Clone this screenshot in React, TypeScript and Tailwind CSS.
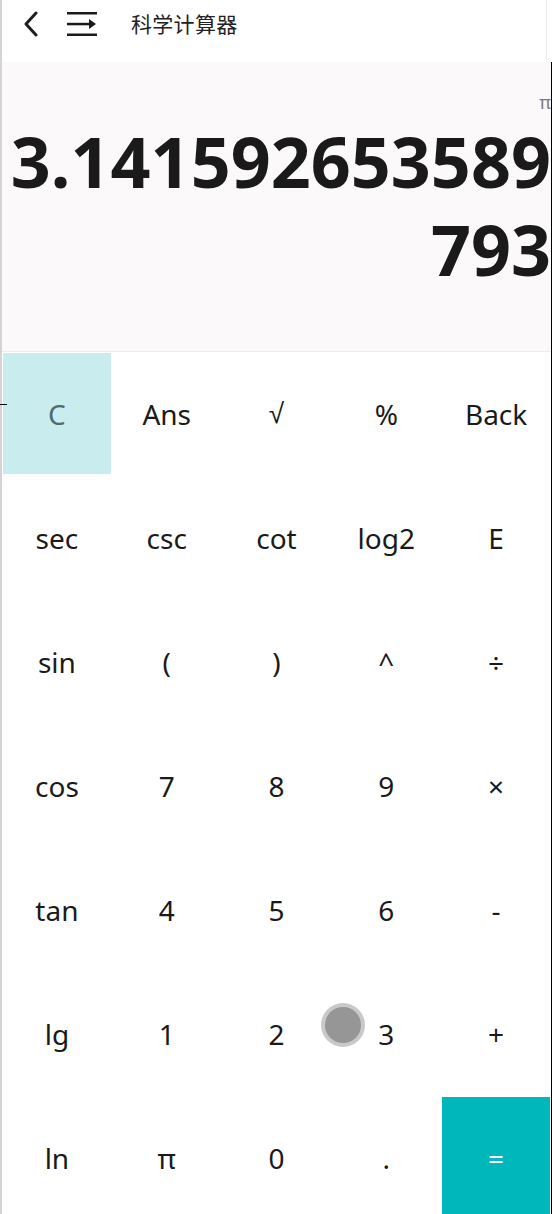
import React from "react";

const rows: string[][] = [
  ["C", "Ans", "√", "%", "Back"],
  ["sec", "csc", "cot", "log2", "E"],
  ["sin", "(", ")", "^", "÷"],
  ["cos", "7", "8", "9", "×"],
  ["tan", "4", "5", "6", "-"],
  ["lg", "1", "2", "3", "+"],
  ["ln", "π", "0", ".", "="],
];

export default function App() {
  return (
    <div className="relative w-[552px] h-[1214px] overflow-hidden bg-white" style={{ fontFamily: '"Noto Sans", "Noto Sans CJK SC", sans-serif' }}>
      <div className="absolute left-0 top-0 h-full w-[2px] bg-[#d4d4d4]" />
      {/* header */}
      <div className="flex items-center h-[62px] pb-[14px] pl-[22px] border-r border-[#eeeeee] mr-[5px]">
        <svg width="18" height="26" viewBox="0 0 18 26" className="mr-[27px]">
          <path d="M14 2 L4 13 L14 24" fill="none" stroke="#1f1f1f" strokeWidth="3" strokeLinecap="round" strokeLinejoin="round" />
        </svg>
        <svg width="30" height="26" viewBox="0 0 30 26" className="mr-[34px]">
          <rect x="0" y="1" width="30" height="2.5" fill="#1a1a1a" />
          <rect x="0" y="11.8" width="22" height="2.5" fill="#1a1a1a" />
          <path d="M22 8 L29 13 L22 18 Z" fill="#1a1a1a" />
          <rect x="0" y="22.5" width="30" height="2.5" fill="#1a1a1a" />
        </svg>
        <span className="text-[21px] text-[#222] tracking-[0.3px]" style={{ fontFamily: '"Noto Sans CJK SC", sans-serif' }}>科学计算器</span>
      </div>
      <div className="border-r border-black">
        {/* display */}
        <div className="flex flex-col h-[290px] bg-[#fbf9fa] border-b border-[#e4f1f1] pl-[2px] pt-[30px]">
          <div className="text-right text-[18px] leading-[20px] text-[#7d7b78]">π</div>
          <div className="pt-[5px] text-right font-bold text-[70px] leading-[88px] text-[#1a1a1a] break-all">
            3.141592653589793
          </div>
        </div>
        {/* keypad */}
        <div className="grid grid-cols-5 pl-[2px]">
          {rows.flat().map((k, i) => {
            const isC = k === "C";
            const isEq = k === "=";
            return (
              <div key={i} className="h-[124px] p-px pb-[2px]">
                <div
                  className={
                    "h-full flex items-center justify-center pt-px text-[28px] " +
                    (isC ? "bg-[#c9ecee] text-[#4f6b72]" : isEq ? "bg-[#00b7bb] text-white" : "text-[#1a1a1a]")
                  }
                  style={k === "√" ? { fontFamily: '"Liberation Sans", sans-serif' } : undefined}
                >
                  {k}
                </div>
              </div>
            );
          })}
        </div>
      </div>
      <div className="absolute left-0 top-[404px] w-[7px] h-px bg-black" />
      <div className="absolute left-[321px] top-[1003px] w-[44px] h-[44px] rounded-full bg-[#c9c9c9] flex items-center justify-center">
        <div className="w-[36px] h-[36px] rounded-full bg-[#969696]" />
      </div>
    </div>
  );
}
